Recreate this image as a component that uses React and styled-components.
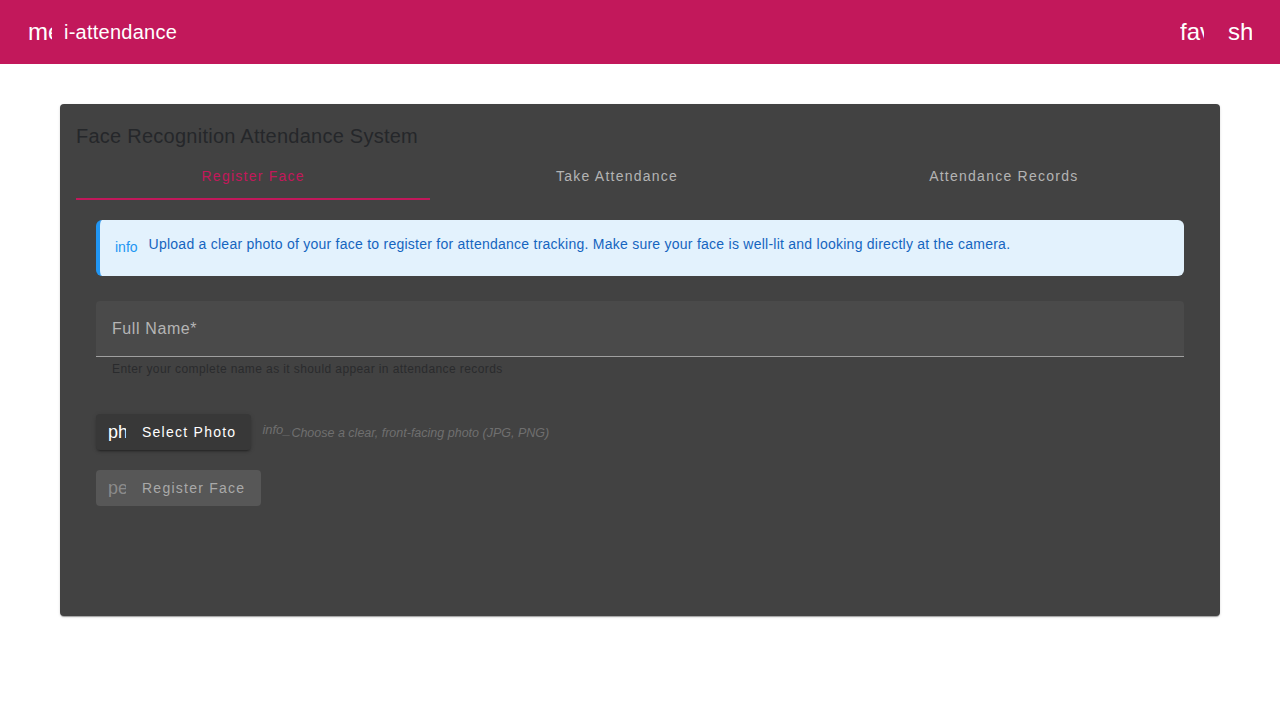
import React from "react"
import styled, { createGlobalStyle } from "styled-components"

const GlobalStyle = createGlobalStyle`
  body {
    margin: 0;
    background: #ffffff;
    font-family: "Liberation Sans", Arial, sans-serif;
  }
`

const AppBar = styled.header`
  height: 64px;
  background: #c2185b;
  display: flex;
  align-items: center;
  padding: 0 16px;
  color: #ffffff;
`

const IconButton = styled.div`
  width: 48px;
  height: 48px;
  display: flex;
  align-items: center;
  justify-content: center;
`

// material icon ligatures never loaded, so the raw names show up clipped
const IconText = styled.span`
  display: inline-block;
  width: ${p => p.$size}px;
  overflow: hidden;
  white-space: nowrap;
  font-size: ${p => p.$size}px;
  line-height: 1;
  letter-spacing: 0;
  color: ${p => p.$color || "inherit"};
`

const BarTitle = styled.div`
  font-size: 20px;
  line-height: 1;
  letter-spacing: 0.25px;
  margin-top: -1px;
  flex: 1;
`

const Main = styled.main`
  padding: 40px 60px;
`

const Card = styled.section`
  background: #424242;
  border-radius: 4px;
  min-height: 512px;
  box-sizing: border-box;
  padding: 16px;
  box-shadow: 0 2px 1px -1px rgba(0, 0, 0, 0.2), 0 1px 1px 0 rgba(0, 0, 0, 0.14),
    0 1px 3px 0 rgba(0, 0, 0, 0.12);
`

const CardTitle = styled.h1`
  margin: 0;
  font-size: 20px;
  font-weight: 400;
  line-height: 32px;
  letter-spacing: 0.25px;
  color: #25272a;
`

const Tabs = styled.nav`
  display: flex;
  height: 48px;
`

const Tab = styled.div`
  flex: 1 1 auto;
  padding: 2px 16px 0;
  display: flex;
  align-items: center;
  justify-content: center;
  font-size: 14px;
  letter-spacing: 1.25px;
  color: ${p => (p.$active ? "#c2185b" : "#b4b4b4")};
  border-bottom: 2px solid ${p => (p.$active ? "#c2185b" : "transparent")};
  box-sizing: border-box;
`

const Window = styled.div`
  padding: 20px;
`

const Alert = styled.div`
  display: flex;
  align-items: flex-start;
  min-height: 56px;
  box-sizing: border-box;
  padding: 14px 16px 14px 15px;
  background: #e3f2fd;
  border-left: 4px solid #2196f3;
  border-radius: 6px;
  font-size: 14px;
  line-height: 20px;
  letter-spacing: 0.25px;
  color: #1565c0;
`

const AlertIcon = styled.span`
  font-size: 14px;
  letter-spacing: 0;
  color: #2196f3;
  margin: 3px 11px 0 0;
`

const Field = styled.div`
  margin-top: 25px;
  height: 56px;
  box-sizing: border-box;
  background: #4a4a4a;
  border-radius: 4px 4px 0 0;
  border-bottom: 1px solid #a0a0a0;
  display: flex;
  align-items: center;
  padding: 1px 16px 0;
`

const Label = styled.label`
  font-size: 16px;
  letter-spacing: 0.6px;
  color: #b5b5b5;
`

const Hint = styled.div`
  padding: 5px 16px 0;
  font-size: 12px;
  line-height: 14px;
  letter-spacing: 0.4px;
  color: #2a2b2d;
`

const UploadRow = styled.div`
  display: flex;
  align-items: center;
  margin-top: 38px;
`

const Button = styled.button`
  display: inline-flex;
  align-items: center;
  height: 36px;
  padding: 0 ${p => p.$padRight}px 0 12px;
  border: none;
  border-radius: 4px;
  font-family: inherit;
  font-size: 14px;
  font-weight: 500;
  letter-spacing: 1.25px;
  background: ${p => (p.$disabled ? "#575757" : "#383838")};
  color: ${p => (p.$disabled ? "#a9a9a9" : "#ffffff")};
  box-shadow: ${p =>
    p.$disabled
      ? "none"
      : "0 3px 1px -2px rgba(0,0,0,0.2), 0 2px 2px 0 rgba(0,0,0,0.14), 0 1px 5px 0 rgba(0,0,0,0.12)"};
  & > span:first-child {
    margin-right: 16px;
  }
`

const Helper = styled.div`
  margin-left: 11px;
  display: flex;
  align-items: baseline;
  font-style: italic;
  font-size: 12.5px;
  color: #6f6f6f;
`

const HelperIcon = styled.span`
  display: inline-block;
  width: 29px;
  overflow: hidden;
  white-space: nowrap;
  font-size: 13px;
  position: relative;
  top: -3px;
`

const SubmitRow = styled.div`
  margin-top: 20px;
`

export default function App() {
  return (
    <>
      <GlobalStyle />
      <AppBar>
        <IconButton>
          <IconText $size={24}>menu</IconText>
        </IconButton>
        <BarTitle>i-attendance</BarTitle>
        <IconButton>
          <IconText $size={24}>favorite</IconText>
        </IconButton>
        <IconButton>
          <IconText $size={24}>share</IconText>
        </IconButton>
      </AppBar>

      <Main>
        <Card>
          <CardTitle>Face Recognition Attendance System</CardTitle>
          <Tabs>
            <Tab $active>Register Face</Tab>
            <Tab>Take Attendance</Tab>
            <Tab>Attendance Records</Tab>
          </Tabs>

          <Window>
            <Alert>
              <AlertIcon>info</AlertIcon>
              <span>
                Upload a clear photo of your face to register for attendance tracking. Make sure
                your face is well-lit and looking directly at the camera.
              </span>
            </Alert>

            <Field>
              <Label>Full Name*</Label>
            </Field>
            <Hint>Enter your complete name as it should appear in attendance records</Hint>

            <UploadRow>
              <Button $padRight={15}>
                <IconText $size={18}>photo_camera</IconText>
                Select Photo
              </Button>
              <Helper>
                <HelperIcon>info_outline</HelperIcon>
                Choose a clear, front-facing photo (JPG, PNG)
              </Helper>
            </UploadRow>

            <SubmitRow>
              <Button $disabled $padRight={16}>
                <IconText $size={18} $color="#8a8a8a">person_add</IconText>
                Register Face
              </Button>
            </SubmitRow>
          </Window>
        </Card>
      </Main>
    </>
  )
}
